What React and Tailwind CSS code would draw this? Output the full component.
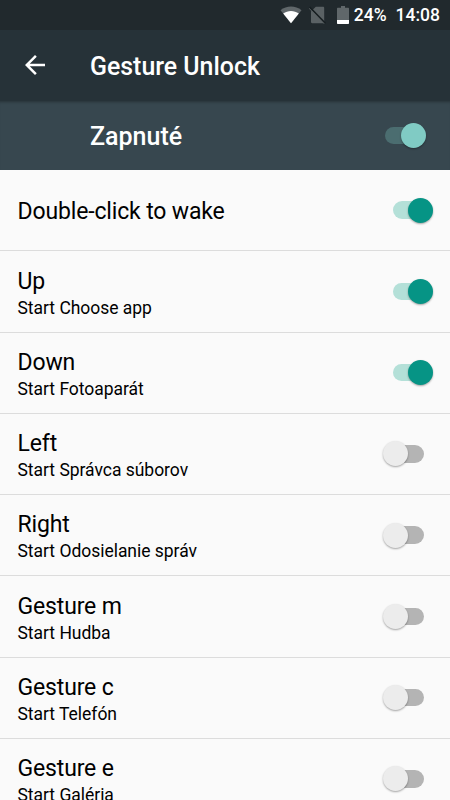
import React, { useState } from 'react';

const initialGestures = [
  { id: 'wake', title: 'Double-click to wake', on: true },
  { id: 'up', title: 'Up', summary: 'Start Choose app', on: true },
  { id: 'down', title: 'Down', summary: 'Start Fotoaparát', on: true },
  { id: 'left', title: 'Left', summary: 'Start Správca súborov', on: false },
  { id: 'right', title: 'Right', summary: 'Start Odosielanie správ', on: false },
  { id: 'm', title: 'Gesture m', summary: 'Start Hudba', on: false },
  { id: 'c', title: 'Gesture c', summary: 'Start Telefón', on: false },
  { id: 'e', title: 'Gesture e', summary: 'Start Galéria', on: false },
];

function StatusBar() {
  return (
    <div className="flex h-[30px] shrink-0 items-center justify-end bg-[#21292d] pr-[10px] text-[17.5px] font-medium text-white">
      <svg className="mr-[7px] h-[18px] w-[22px]" viewBox="0 0 22 18">
        <path d="M0.5 4.2C6.5-.6 15.5-.6 21.5 4.2L11 17.3z" fill="#60676a" />
        <path d="M3.2 7.6c4.6-3.4 11-3.4 15.6 0L11 17.3z" fill="#fff" />
      </svg>
      <svg className="mr-[11px] h-[18px] w-[17px]" viewBox="0 0 17 18">
        <path d="M6.8.8H14c.7 0 1.2.5 1.2 1.2v14c0 .7-.5 1.2-1.2 1.2H3.2c-.7 0-1.2-.5-1.2-1.2V5.6z" fill="#5a6164" />
        <path d="M.6 1.2 16.4 17.4" stroke="#181f22" strokeWidth="1.7" />
        <path d="M0 2.2 15.2 17.8" stroke="#5a6164" strokeWidth="1" />
      </svg>
      <svg className="mr-[5px] h-[18px] w-[12px]" viewBox="0 0 12 18">
        <path d="M4 0h4v1.8h3c.6 0 1 .4 1 1V14H0V2.8c0-.6.4-1 1-1h3z" fill="#60676a" />
        <path d="M0 14h12v3c0 .6-.4 1-1 1H1c-.6 0-1-.4-1-1z" fill="#fff" />
      </svg>
      <span className="mr-[9px] pt-[1px]">24%</span>
      <span className="pt-[1px]">14:08</span>
    </div>
  );
}

function Toggle({ on, dark, onClick }) {
  const track = dark ? 'bg-[#4b6d70]' : on ? 'bg-[#b4e0d8]' : 'bg-[#b4b4b4]';
  const thumb = dark ? 'bg-[#80cbc4]' : on ? 'bg-[#069485]' : 'bg-[#ececec]';

  return (
    <button
      role="switch"
      aria-checked={on}
      onClick={onClick}
      className={`flex h-[25px] w-[41px] shrink-0 items-center ${on ? 'justify-end' : 'justify-start'}`}
    >
      {on && <span className={`-mr-[13px] h-[17.5px] w-[28.5px] rounded-l-full ${track}`} />}
      <span className={`z-10 size-[25px] shrink-0 rounded-full shadow-[0_1px_2px_rgba(0,0,0,0.35)] ${thumb}`} />
      {!on && <span className={`-ml-[13px] h-[17.5px] w-[29px] rounded-r-full ${track}`} />}
    </button>
  );
}

function GestureRow({ gesture, onToggle }) {
  return (
    <li
      className={`flex h-[81.25px] shrink-0 items-center justify-between border-b border-[#dcdcdc] pl-[17.5px] ${
        gesture.on ? 'pr-[17px]' : 'pr-[26px]'
      }`}
    >
      <div className={`text-black ${gesture.summary ? 'pt-[5.4px]' : 'pt-[2px]'}`}>
        <p className="text-[23px] leading-[27px] tracking-[-0.15px]">{gesture.title}</p>
        {gesture.summary && <p className="text-[17.5px] leading-[26px] tracking-[-0.03px]">{gesture.summary}</p>}
      </div>
      <Toggle on={gesture.on} onClick={() => onToggle(gesture.id)} />
    </li>
  );
}

export default function App() {
  const [enabled, setEnabled] = useState(true);
  const [gestures, setGestures] = useState(initialGestures);

  const toggleGesture = (id) => {
    setGestures(gestures.map((g) => (g.id === id ? { ...g, on: !g.on } : g)));
  };

  return (
    <div className="flex h-[800px] w-[450px] flex-col overflow-hidden bg-[#fafafa] font-['Roboto',sans-serif]">
      <StatusBar />

      <header className="flex h-[70.5px] shrink-0 items-center bg-[#263238] pl-[20px] text-white">
        <svg className="size-[30px]" viewBox="0 0 24 24" fill="currentColor">
          <path d="M20 11H7.83l5.59-5.59L12 4l-8 8 8 8 1.41-1.41L7.83 13H20v-2z" />
        </svg>
        <h1 className="ml-[40px] pt-[2px] text-[24.9px] font-medium">Gesture Unlock</h1>
      </header>

      <div className="flex h-[69.5px] shrink-0 items-center justify-between bg-[#37474f] pr-[24.5px] pl-[90px] shadow-[inset_0_3px_3px_-2px_rgba(0,0,0,0.3)]">
        <span className="pt-[2px] text-[25px] font-medium text-white">Zapnuté</span>
        <Toggle dark on={enabled} onClick={() => setEnabled(!enabled)} />
      </div>

      <ul className="flex flex-col">
        {gestures.map((g) => (
          <GestureRow key={g.id} gesture={g} onToggle={toggleGesture} />
        ))}
      </ul>
    </div>
  );
}
